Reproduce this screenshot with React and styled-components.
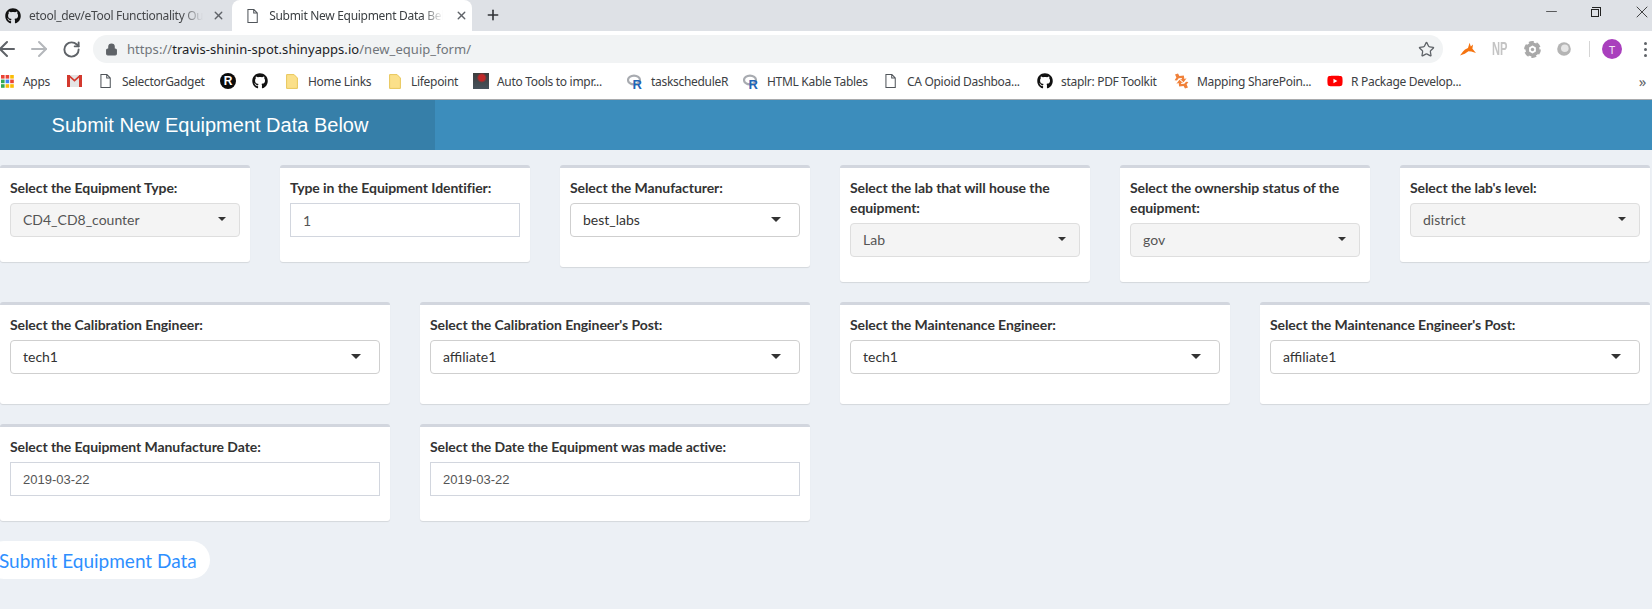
import React from 'react';
import styled, { createGlobalStyle } from 'styled-components';
import { ArrowLeft, ArrowRight, RotateCw, Star, Plus, X, Lock, Minus } from 'lucide-react';
import { FaGithub, FaYoutube } from 'react-icons/fa';

const GlobalStyle = createGlobalStyle`
  html, body { margin: 0; padding: 0; height: 609px; overflow: hidden; background: #ecf0f5; }
  * { box-sizing: border-box; }
`;

const chromeFont = '"Noto Sans", "Open Sans", sans-serif';
const formFont = 'Lato, "Noto Sans", sans-serif';

const TabStrip = styled.div`
  display: flex;
  align-items: stretch;
  height: 31px;
  background: #dee1e6;
  font-family: ${chromeFont};
  font-size: 12px;
  color: #3c4043;
`;
const Tab = styled.div`
  display: flex;
  align-items: center;
  width: ${(p) => p.$width}px;
  padding-left: ${(p) => p.$pad}px;
  gap: ${(p) => p.$gap}px;
  background: ${(p) => (p.$active ? '#fff' : '#dee1e6')};
  border-radius: ${(p) => (p.$active ? '8px 8px 0 0' : '0')};
  color: ${(p) => (p.$active ? '#3c4043' : '#45474a')};
`;
const TabTitle = styled.span`
  width: ${(p) => p.$width}px;
  white-space: nowrap;
  overflow: hidden;
  letter-spacing: -0.3px;
  mask-image: linear-gradient(90deg, #000 88%, transparent);
`;
const TabClose = styled(X)`
  width: 13px;
  height: 13px;
  margin-left: 1px;
  color: #5f6368;
  stroke-width: 2.5;
`;
const NewTab = styled(Plus)`
  width: 16px;
  height: 16px;
  margin: 7px 0 0 13px;
  color: #303236;
  stroke-width: 2.4;
`;
const WindowControls = styled.div`
  display: flex;
  align-items: center;
  gap: 31px;
  margin-left: auto;
  padding-bottom: 8px;
  color: #222;
`;
const RestoreIcon = styled.span`
  position: relative;
  width: 8px;
  height: 8px;
  margin: 2px 2px 0 0;
  border: 1px solid #222;
  &::after {
    content: '';
    position: absolute;
    top: -3px;
    right: -3px;
    width: 8px;
    height: 8px;
    border: 1px solid #222;
    border-left: 0;
    border-bottom: 0;
  }
`;

const Toolbar = styled.div`
  display: flex;
  align-items: center;
  height: 32px;
  padding-top: 4px;
  background: #fff;
`;
const NavIcons = styled.div`
  display: flex;
  align-items: center;
  flex: none;
  gap: 8px;
  width: 98px;
  margin-left: -5px;
  color: #5f6368;
`;
const ReloadIcon = styled(RotateCw)`
  width: 19px;
  height: 19px;
  margin-left: 3px;
  stroke-width: 2.4;
`;
const AddressBar = styled.div`
  display: flex;
  align-items: center;
  flex: none;
  width: 1350px;
  height: 28px;
  padding: 0 8px 0 12px;
  gap: 9px;
  border-radius: 14px;
  background: #f1f3f4;
  font-family: ${chromeFont};
  font-size: 13px;
  color: #70757a;
`;
const Host = styled.span`
  color: #202124;
`;
const Url = styled.span`
  flex: 1;
  letter-spacing: 0.05px;
`;
const Extensions = styled.div`
  display: flex;
  align-items: center;
  gap: 16px;
  margin-left: 17px;
  color: #b0b0b0;
`;
const NpMark = styled.span`
  width: 16px;
  font-family: "Liberation Sans", sans-serif;
  font-size: 18px;
  font-weight: 700;
  color: #c4c4c4;
  transform: scaleX(0.62);
  transform-origin: left;
  white-space: nowrap;
`;
const Divider = styled.span`
  width: 1px;
  height: 16px;
  margin-left: 2px;
  background: #d5d5d5;
`;
const Avatar = styled.span`
  display: flex;
  align-items: center;
  justify-content: center;
  width: 20px;
  height: 20px;
  margin-left: -4px;
  border-radius: 50%;
  background: #a93fbd;
  color: #f3e5f5;
  font-family: ${chromeFont};
  font-size: 11px;
`;
const Kebab = styled.span`
  display: flex;
  flex-direction: column;
  gap: 3px;
  margin-left: 6px;
  & i {
    width: 3px;
    height: 3px;
    border-radius: 50%;
    background: #5f6368;
  }
`;

const BookmarkBar = styled.div`
  display: flex;
  align-items: center;
  height: 37px;
  gap: 16px;
  margin-left: -1px;
  padding-right: 6px;
  background: #fff;
  border-bottom: 1px solid #a9abad;
  font-family: ${chromeFont};
  font-size: 12px;
  letter-spacing: -0.3px;
  color: #3c4043;
`;
const Bookmark = styled.div`
  display: flex;
  align-items: center;
  gap: 8px;
  white-space: nowrap;
`;
const BookmarkIcon = styled.span`
  display: flex;
  align-items: center;
  justify-content: center;
  width: 16px;
  height: 16px;
`;
const BookmarkText = styled.span`
  display: block;
  width: ${(p) => p.$width}px;
  white-space: nowrap;
`;
const Overflow = styled.span`
  margin-left: auto;
  color: #5f6368;
  font-size: 15px;
`;
const Thumb = styled.span`
  width: 16px;
  height: 16px;
  background: radial-gradient(circle at 55% 30%, #c02828 0 3px, transparent 5px),
    linear-gradient(180deg, #3d3d3d, #46525c);
`;

const Page = styled.div`
  width: 1680px;
  margin-left: -15px;
  background: #ecf0f5;
`;
const HeaderBar = styled.header`
  height: 50px;
  background: #3c8dbc;
`;
const HeaderLogo = styled.div`
  width: 450px;
  height: 50px;
  background: #367fa9;
  color: #fff;
  font-family: "Liberation Sans", sans-serif;
  font-size: 20px;
  line-height: 50px;
  text-align: center;
`;
const Content = styled.main`
  padding-top: 15px;
`;
const Row = styled.div`
  display: grid;
  grid-template-columns: repeat(${(p) => p.$cols}, 1fr);
  align-items: start;
`;
const Column = styled.div`
  padding: 0 15px;
`;
const Card = styled.div`
  margin-bottom: 20px;
  padding: 10px 10px ${(p) => (p.$tall ? 30 : 25)}px;
  background: #fff;
  border-top: 3px solid #d2d6de;
  border-radius: 3px;
  box-shadow: 0 1px 1px rgba(0, 0, 0, 0.1);
  font-family: ${formFont};
  font-size: 14px;
`;
const Label = styled.label`
  display: block;
  margin-bottom: 5px;
  font-weight: 700;
  line-height: 20px;
  letter-spacing: -0.08px;
  color: #333;
`;
const Select = styled.div`
  display: flex;
  align-items: center;
  justify-content: space-between;
  height: 34px;
  padding: 0 ${(p) => (p.$disabled ? 13 : 18)}px 2px 12px;
  border: 1px solid ${(p) => (p.$disabled ? '#dedede' : '#cfcfcf')};
  border-radius: 4px;
  background: ${(p) => (p.$disabled ? '#f4f4f4' : '#fff')};
  color: ${(p) => (p.$disabled ? '#555' : '#333')};
`;
const Caret = styled.span`
  width: 0;
  height: 0;
  border-style: solid;
  border-color: #333 transparent transparent;
  border-width: ${(p) => (p.$small ? '4px 4px 0' : '5px 5px 0')};
`;
const TextInput = styled.input`
  display: block;
  width: 100%;
  height: 34px;
  padding: 0 12px;
  border: 1px solid #d2d6de;
  border-radius: 0;
  background: #fff;
  outline: none;
  color: #555;
  font-family: ${(p) => (p.$date ? '"Liberation Sans", sans-serif' : formFont)};
  font-size: ${(p) => (p.$date ? '13px' : '14px')};
`;
const SubmitButton = styled.button`
  display: block;
  width: 225px;
  height: 38px;
  margin: 0;
  padding: 0 0 0 14px;
  border: 0;
  border-radius: 19px;
  background: #fff;
  color: #2e8fff;
  font-family: ${formFont};
  font-size: 19px;
  text-align: left;
`;

function GmailIcon() {
  return (
    <svg width="15" height="12" viewBox="0 0 15 12">
      <rect width="15" height="12" fill="#e4e4e4" />
      <path d="M0 0h3v12H0zM12 0h3v12h-3z" fill="#d3392e" />
      <path d="M0 0h2.4l5.1 4.4L12.6 0H15L7.5 6.8z" fill="#d3392e" />
    </svg>
  );
}

function AppsIcon() {
  const colors = ['#ea4335', '#ea4335', '#fbbc05', '#34a853', '#4285f4', '#ea4335', '#34a853', '#fbbc05', '#fbbc05'];
  return (
    <svg width="13" height="13" viewBox="0 0 13 13">
      {colors.map((c, i) => (
        <rect key={i} x={(i % 3) * 4.6} y={Math.floor(i / 3) * 4.6} width="3.6" height="3.6" fill={c} />
      ))}
    </svg>
  );
}

function PageIcon({ size = 14 }) {
  return (
    <svg width={size * 0.8} height={size} viewBox="0 0 12 15" fill="none" stroke="#50555a" strokeWidth="1.1">
      <path d="M1 .6h6.4L11 4.2v10.2H1zM7.2.6v3.8H11" />
    </svg>
  );
}

function FolderIcon() {
  return (
    <svg width="12" height="15" viewBox="0 0 12 15">
      <path d="M.6.6h7.5l3.3 3.4v10.4H.6z" fill="#fbe08a" stroke="#e8c65a" />
    </svg>
  );
}

function RBlackIcon() {
  return (
    <svg width="16" height="16" viewBox="0 0 16 16">
      <circle cx="8" cy="8" r="8" fill="#0b0b0b" />
      <text x="8" y="12.2" fontSize="12" fontWeight="700" fill="#fff" textAnchor="middle" fontFamily="Liberation Sans">R</text>
    </svg>
  );
}

function RLangIcon() {
  return (
    <svg width="16" height="15" viewBox="0 0 16 15">
      <ellipse cx="7" cy="6" rx="6" ry="4.4" fill="none" stroke="#a8abb0" strokeWidth="2.2" />
      <text x="10" y="14.5" fontSize="13" fontWeight="700" fill="#1f65b7" textAnchor="middle" fontFamily="Liberation Sans">R</text>
    </svg>
  );
}

function ShareIcon() {
  return (
    <svg width="15" height="16" viewBox="0 0 15 16" fill="#f0813a">
      <path d="M1 1.5l3-1 1.4 2.6 4.4-.6.6 3.4 2.2-.6-3 4-3.6-3.2 2 .2-.3-1.4-3 .3L3 7.4.6 7.2l1.8-2.6z" />
      <path d="M14 14.5l-3 1-1.4-2.6-4.4.6-.6-3.4-2.2.6 3-4 3.6 3.2-2-.2.3 1.4 3-.3 1.7-2 2.4.2-1.8 2.6z" />
    </svg>
  );
}

function RabbitIcon() {
  return (
    <svg width="16" height="14" viewBox="0 0 16 14">
      <path d="M0 13.4L3 9.6 5 7.6 8 6 9.6.8l1.2 3.6L13 2.6l-.6 4.2L16 11l-4.6-1.6-3-.2-3.6 2.6z" fill="#f5730f" />
    </svg>
  );
}

function GearIcon() {
  return (
    <svg width="17" height="17" viewBox="0 0 17 17">
      <circle cx="8.5" cy="8.5" r="7" fill="#a9a9a9" />
      <circle cx="8.5" cy="8.5" r="7.4" fill="none" stroke="#a9a9a9" strokeWidth="2" strokeDasharray="5 2.75" />
      <path d="M8.5 4.6l3.4 1.95v3.9L8.5 12.4l-3.4-1.95v-3.9z" fill="#fff" />
      <circle cx="8.5" cy="8.5" r="1.7" fill="#a9a9a9" />
    </svg>
  );
}

function OrbIcon() {
  return (
    <svg width="14" height="14" viewBox="0 0 14 14">
      <circle cx="7" cy="7" r="6.8" fill="#b4b4b4" />
      <circle cx="7.8" cy="6.2" r="3.8" fill="#e6e6e6" />
    </svg>
  );
}

const bookmarks = [
  { icon: <AppsIcon />, text: 'Apps', width: 27 },
  { icon: <GmailIcon /> },
  { icon: <PageIcon />, text: 'SelectorGadget', width: 82 },
  { icon: <RBlackIcon /> },
  { icon: <FaGithub size={16} color="#111" /> },
  { icon: <FolderIcon />, text: 'Home Links', width: 63 },
  { icon: <FolderIcon />, text: 'Lifepoint', width: 46 },
  { icon: <Thumb />, text: 'Auto Tools to impr...', width: 114 },
  { icon: <RLangIcon />, text: 'taskscheduleR', width: 76 },
  { icon: <RLangIcon />, text: 'HTML Kable Tables', width: 100 },
  { icon: <PageIcon />, text: 'CA Opioid Dashboa...', width: 114 },
  { icon: <FaGithub size={16} color="#111" />, text: 'staplr: PDF Toolkit', width: 96 },
  { icon: <ShareIcon />, text: 'Mapping SharePoin...', width: 114 },
  { icon: <FaYoutube size={16} color="#f00" />, text: 'R Package Develop...', width: 110 },
];

const firstRow = [
  { label: 'Select the Equipment Type:', value: 'CD4_CD8_counter', kind: 'disabled' },
  { label: 'Type in the Equipment Identifier:', value: '1', kind: 'input' },
  { label: 'Select the Manufacturer:', value: 'best_labs', kind: 'select' },
  { label: 'Select the lab that will house the equipment:', value: 'Lab', kind: 'disabled' },
  { label: 'Select the ownership status of the equipment:', value: 'gov', kind: 'disabled' },
  { label: "Select the lab's level:", value: 'district', kind: 'disabled' },
];
const secondRow = [
  { label: 'Select the Calibration Engineer:', value: 'tech1', kind: 'select' },
  { label: "Select the Calibration Engineer's Post:", value: 'affiliate1', kind: 'select' },
  { label: 'Select the Maintenance Engineer:', value: 'tech1', kind: 'select' },
  { label: "Select the Maintenance Engineer's Post:", value: 'affiliate1', kind: 'select' },
];
const thirdRow = [
  { label: 'Select the Equipment Manufacture Date:', value: '2019-03-22', kind: 'date' },
  { label: 'Select the Date the Equipment was made active:', value: '2019-03-22', kind: 'date' },
  null,
  null,
];

function Field({ label, value, kind }) {
  return (
    <Card $tall={kind === 'select'}>
      <Label>{label}</Label>
      {kind === 'disabled' && (
        <Select $disabled>
          {value}
          <Caret $small />
        </Select>
      )}
      {kind === 'select' && (
        <Select>
          {value}
          <Caret />
        </Select>
      )}
      {kind === 'input' && <TextInput defaultValue={value} />}
      {kind === 'date' && <TextInput $date defaultValue={value} />}
    </Card>
  );
}

function FormRow({ fields }) {
  return (
    <Row $cols={fields.length}>
      {fields.map((f, i) => (
        <Column key={i}>{f && <Field {...f} />}</Column>
      ))}
    </Row>
  );
}

export default function App() {
  return (
    <>
      <GlobalStyle />
      <TabStrip>
        <Tab $width={232} $pad={5} $gap={8}>
          <FaGithub size={16} color="#111" />
          <TabTitle $width={174}>etool_dev/eTool Functionality Outline</TabTitle>
          <TabClose />
        </Tab>
        <Tab $active $width={240} $pad={15} $gap={11}>
          <PageIcon />
          <TabTitle $width={174}>Submit New Equipment Data Below</TabTitle>
          <TabClose />
        </Tab>
        <NewTab />
        <WindowControls>
          <Minus size={17} strokeWidth={1} />
          <RestoreIcon />
          <X size={20} strokeWidth={1} />
        </WindowControls>
      </TabStrip>
      <Toolbar>
        <NavIcons>
          <ArrowLeft size={24} strokeWidth={2} />
          <ArrowRight size={24} strokeWidth={2} color="#b4b7bb" />
          <ReloadIcon />
        </NavIcons>
        <AddressBar>
          <Lock size={13} fill="#5f6368" color="#5f6368" />
          <Url>
            https://<Host>travis-shinin-spot.shinyapps.io</Host>/new_equip_form/
          </Url>
          <Star size={17} color="#5f6368" strokeWidth={1.8} />
        </AddressBar>
        <Extensions>
          <RabbitIcon />
          <NpMark>NP</NpMark>
          <GearIcon />
          <OrbIcon />
          <Divider />
          <Avatar>T</Avatar>
          <Kebab>
            <i />
            <i />
            <i />
          </Kebab>
        </Extensions>
      </Toolbar>
      <BookmarkBar>
        {bookmarks.map((b, i) => (
          <Bookmark key={i}>
            <BookmarkIcon>{b.icon}</BookmarkIcon>
            {b.text && <BookmarkText $width={b.width}>{b.text}</BookmarkText>}
          </Bookmark>
        ))}
        <Overflow>»</Overflow>
      </BookmarkBar>
      <Page>
        <HeaderBar>
          <HeaderLogo>Submit New Equipment Data Below</HeaderLogo>
        </HeaderBar>
        <Content>
          <FormRow fields={firstRow} />
          <FormRow fields={secondRow} />
          <FormRow fields={thirdRow} />
          <SubmitButton>Submit Equipment Data</SubmitButton>
        </Content>
      </Page>
    </>
  );
}
